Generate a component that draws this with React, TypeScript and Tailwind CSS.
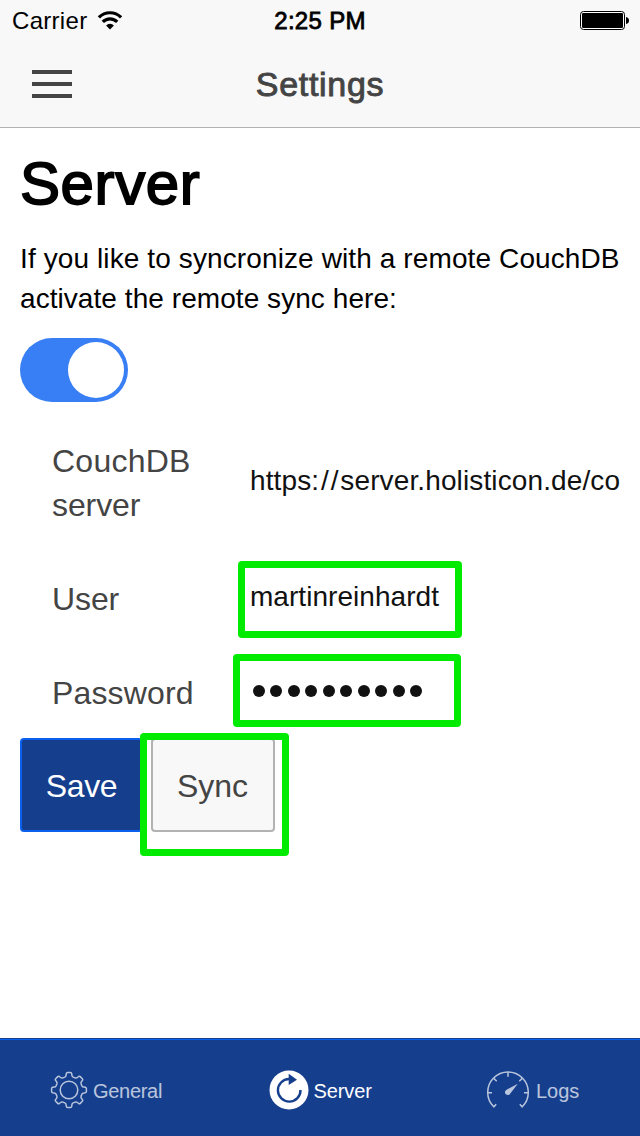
import React from 'react';

const FONT = "font-['Liberation_Sans',Arial,sans-serif]";

function WifiIcon() {
  return (
    <svg width="26" height="20" viewBox="0 0 26 20" fill="none" stroke="#000" strokeWidth="3.2">
      <path d="M1.9 6.4 A15.6 15.6 0 0 1 24.1 6.4" />
      <path d="M5.8 10.9 A10 10 0 0 1 20.2 10.9" />
      <path d="M9.1 14.5 A5.2 5.2 0 0 1 16.9 14.5 L13 18.5 Z" fill="#000" stroke="none" />
    </svg>
  );
}

function BatteryIcon() {
  return (
    <svg width="50" height="20" viewBox="0 0 50 20">
      <rect x="0.5" y="0.5" width="44" height="18" rx="3" fill="#fff" stroke="#000" />
      <rect x="2" y="2" width="41" height="15" rx="1.2" fill="#000" />
      <path d="M46 6 Q49 6.5 49 9.5 Q49 12.5 46 13 Z" fill="#000" />
    </svg>
  );
}

function gearPath() {
  const parts: string[] = [];
  for (let i = 0; i < 8; i++) {
    const a = (i * Math.PI) / 4;
    const p = (x: number, y: number) =>
      `${(20 + x * Math.cos(a) - y * Math.sin(a)).toFixed(2)} ${(20 + x * Math.sin(a) + y * Math.cos(a)).toFixed(2)}`;
    parts.push(
      `${i === 0 ? 'M' : 'L'}${p(-4.2, -12.9)}`,
      `Q${p(-3, -13.5)} ${p(-2.9, -14.8)}`,
      `L${p(-2.7, -16.4)}`,
      `Q${p(-2.5, -17.4)} ${p(-1.5, -17.4)}`,
      `L${p(1.5, -17.4)}`,
      `Q${p(2.5, -17.4)} ${p(2.7, -16.4)}`,
      `L${p(2.9, -14.8)}`,
      `Q${p(3, -13.5)} ${p(4.2, -12.9)}`,
    );
  }
  return parts.join(' ') + ' Z';
}

function GearIcon() {
  return (
    <svg width="40" height="40" viewBox="0 0 40 40" fill="none" stroke="currentColor" strokeWidth="1.5" strokeLinejoin="round">
      <path d={gearPath()} />
      <circle cx="20" cy="20" r="8.8" />
    </svg>
  );
}

function RefreshIcon() {
  return (
    <svg width="40" height="40" viewBox="0 0 40 40">
      <circle cx="20" cy="20" r="19.5" fill="#fff" />
      <path d="M31.5 20 A11.3 11.3 0 1 1 20 9" fill="none" stroke="#153e8d" strokeWidth="2.4" />
      <path d="M19.7 3.8 L28 9.8 L19.7 15 Z" fill="#153e8d" />
    </svg>
  );
}

function GaugeIcon() {
  return (
    <svg width="44" height="40" viewBox="0 0 44 40" fill="none" stroke="currentColor" strokeWidth="1.5">
      <path d="M10.2 34.2 L7.8 36.8 A20.3 20.3 0 1 1 36.2 36.8 L33.8 34.2" />
      <path d="M22 2.3 V6.8 M1.7 22.7 H6 M42.3 22.7 H38 M7.7 8.3 L10.7 11.3 M36.3 8.3 L33.3 11.3" />
      <path d="M31.8 13.7 L24.3 23.4 A2.8 2.8 0 1 1 20.2 19.9 Z" fill="currentColor" stroke="none" />
    </svg>
  );
}

export default function App() {
  return (
    <div className={`relative flex h-[1136px] w-[640px] flex-col overflow-hidden bg-white text-black ${FONT}`}>
      <header className="h-32 shrink-0 border-b border-[#b2b2b2] bg-[#f8f8f8]">
        <div className="grid h-[42px] grid-cols-3 items-center pl-3 pr-2.5">
          <div className="flex items-center gap-2.5">
            <span className="text-[24px] leading-10 tracking-[0.3px]">Carrier</span>
            <WifiIcon />
          </div>
          <span className="pr-0.5 text-center text-[24px] leading-10 tracking-[0.3px] [-webkit-text-stroke:0.8px_#000]">2:25 PM</span>
          <div className="flex justify-end">
            <BatteryIcon />
          </div>
        </div>
        <div className="grid h-[85px] grid-cols-[1fr_auto_1fr] items-center px-8 text-[#444]">
          <button className="mb-px flex w-10 flex-col gap-2" aria-label="Menu">
            <span className="h-1 bg-[#444]" />
            <span className="h-1 bg-[#444]" />
            <span className="h-1 bg-[#444]" />
          </button>
          <h1 className="text-[34px] leading-[85px] tracking-[0.7px] [-webkit-text-stroke:0.9px_#444]">Settings</h1>
        </div>
      </header>

      <main className="flex-1 px-5">
        <h2 className="pt-5 text-[60px] leading-[72px] tracking-[0.6px] [-webkit-text-stroke:1.8px_#000]">Server</h2>
        <p className="whitespace-nowrap pt-[19px] text-[28px] leading-10">
          <span className="block tracking-[0.11px]">If you like to syncronize with a remote CouchDB</span>
          <span className="block tracking-[0.06px]">activate the remote sync here:</span>
        </p>
        <div className="mt-[19px] flex h-16 w-[108px] items-center justify-end rounded-full bg-[#387ef5] pr-1">
          <span className="size-14 rounded-full bg-white" />
        </div>

        <form className="mt-3 text-[#444]">
          <div className="flex h-[138px] pl-8">
            <label className="w-[198px] shrink-0 pt-[25px] text-[32px] leading-[44px]">
              <span className="block tracking-[0.25px]">CouchDB</span>
              <span className="block tracking-[-0.1px]">server</span>
            </label>
            <span className="whitespace-nowrap pt-[47px] text-[28px] leading-10 tracking-[0.12px] text-[#111]">
              https<span className="tracking-[1.9px]">://</span>server.holisticon.de/co
            </span>
          </div>
          <div className="flex h-[94px] pl-8">
            <label className="w-[198px] pt-[25px] text-[32px] leading-[44px] tracking-[-0.1px]">User</label>
            <span className="pt-[25px] text-[28px] leading-10 tracking-[0.05px] text-[#111]">martinreinhardt</span>
          </div>
          <div className="flex h-[92px] pl-8">
            <label className="w-[198px] pt-[25px] text-[32px] leading-[44px] tracking-[0.15px]">Password</label>
            <span className="flex gap-[5.5px] pl-[2.8px] pt-[38.5px]">
              {Array.from({ length: 10 }, (_, i) => (
                <span key={i} className="size-3 rounded-full bg-[#111]" />
              ))}
            </span>
          </div>
          <div className="flex gap-2 text-[32px] leading-[92px] tracking-[-0.3px]">
            <button type="button" className="h-[94px] w-[123px] rounded border-2 border-[#0c60ee] bg-[#153e8d] text-white">
              <span className="block h-[90px]">Save</span>
            </button>
            <button type="button" className="h-[94px] w-[124px] rounded border-2 border-[#b2b2b2] bg-[#f8f8f8] tracking-normal text-[#444]">
              <span className="block h-[90px] pr-px">Sync</span>
            </button>
          </div>
        </form>
      </main>

      <nav className="flex h-[98px] shrink-0 border-t border-[#153e8d] bg-[#153e8d] text-[20px] text-white shadow-[inset_0_1px_0_#0c60ee]">
        <a className="flex w-[268.5px] items-center gap-1 pl-[49px] pt-[5px] opacity-70">
          <GearIcon />
          <span className="pt-0.5 tracking-[-0.3px]">General</span>
        </a>
        <a className="flex w-[217.5px] items-center gap-[5px] pt-[5px]">
          <RefreshIcon />
          <span className="pt-0.5 tracking-[-0.1px]">Server</span>
        </a>
        <a className="flex w-[154px] items-center gap-[6px] pt-[5px] opacity-70">
          <GaugeIcon />
          <span className="pt-0.5">Logs</span>
        </a>
      </nav>

      <div className="absolute left-[238px] top-[560.5px] h-[77.5px] w-[224px] rounded-[4px] border-[7px] border-[#00eb00]" />
      <div className="absolute left-[232.7px] top-[654px] h-[73px] w-[228.3px] rounded-[4px] border-[7px] border-[#00eb00]" />
      <div className="absolute left-[140px] top-[733px] h-[122.5px] w-[149.4px] rounded-[4px] border-[7px] border-[#00eb00]" />
    </div>
  );
}
